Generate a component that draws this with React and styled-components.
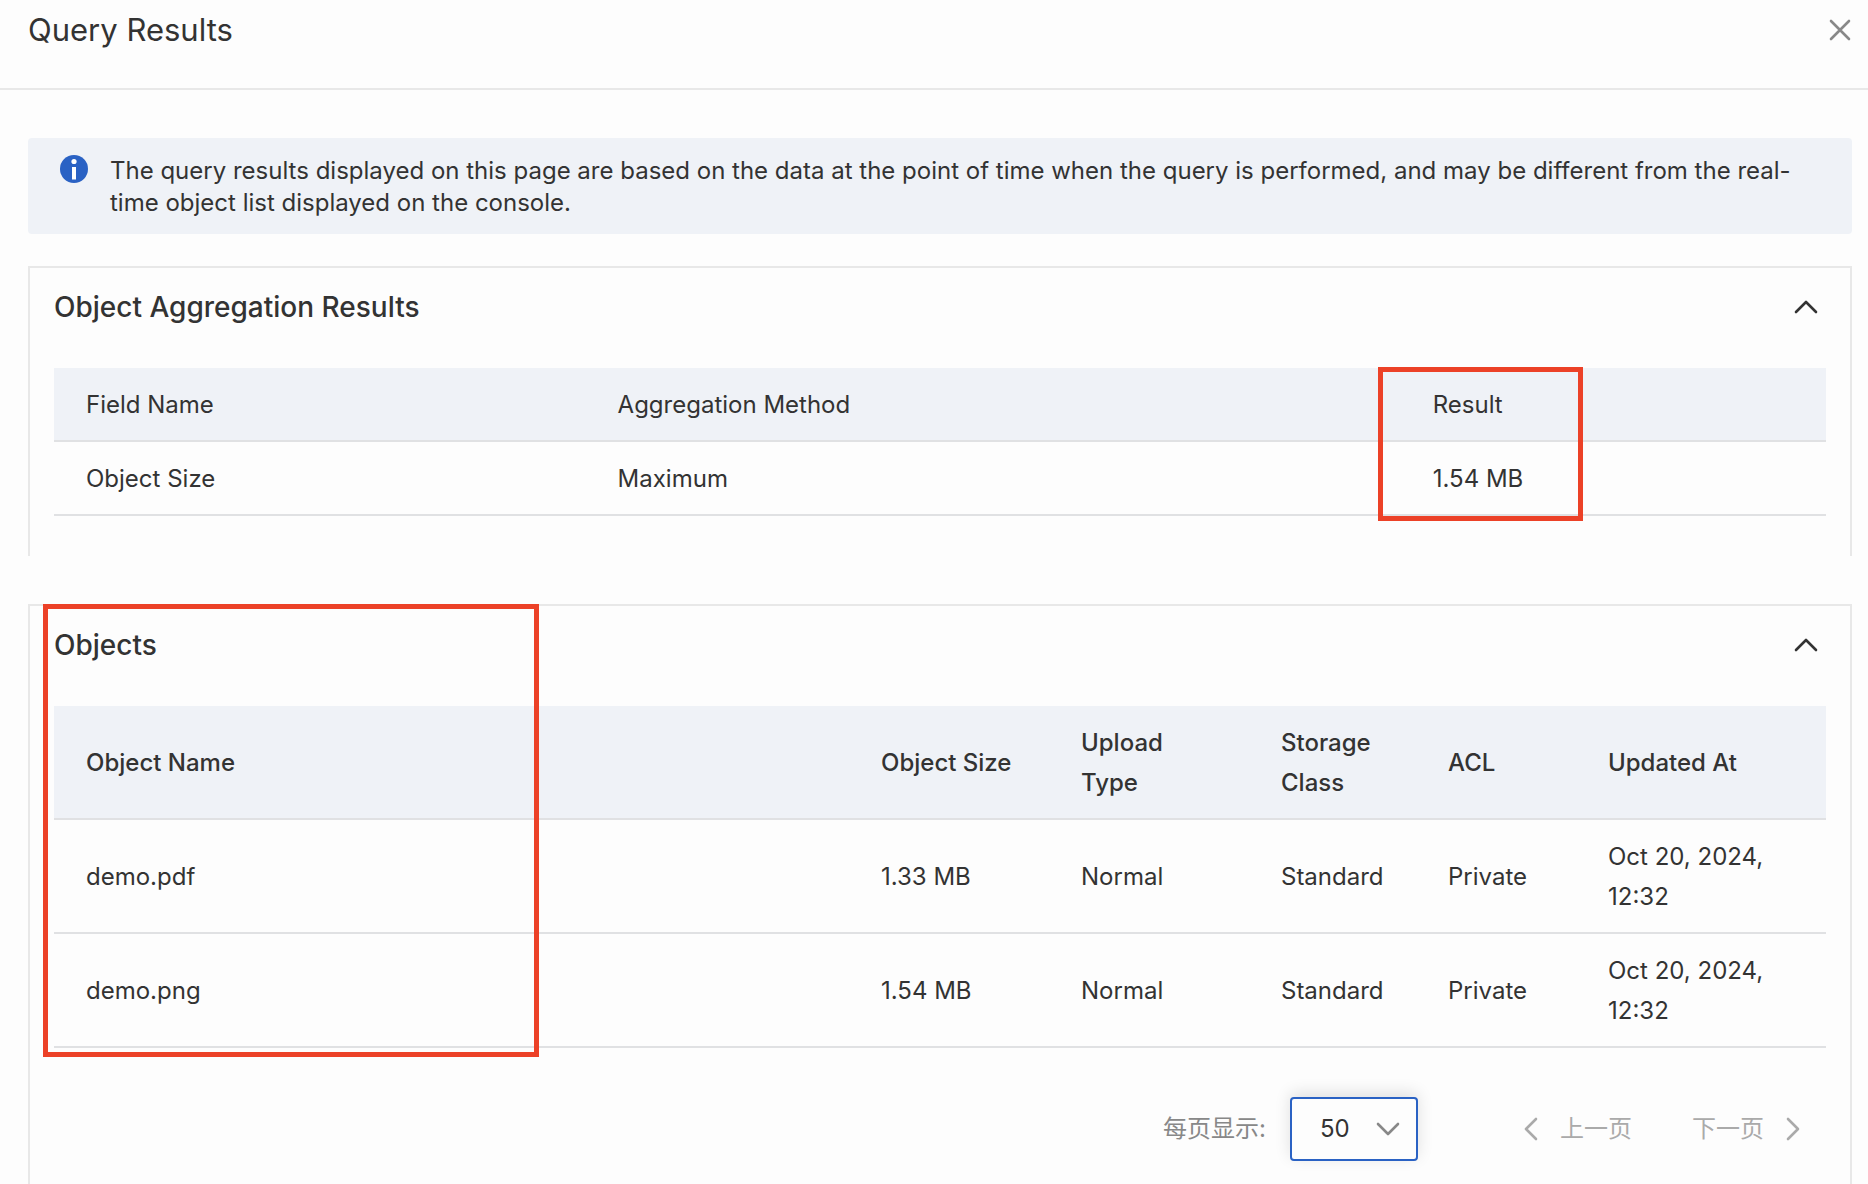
import React, { useState } from "react";
import styled, { createGlobalStyle } from "styled-components";

const GlobalStyle = createGlobalStyle`
  *, *::before, *::after { box-sizing: border-box; }
  body {
    margin: 0;
    background: #fdfdfd;
    color: #333;
    font-family: Inter, "Noto Sans CJK SC", sans-serif;
    font-size: 24px;
    line-height: 32px;
  }
`;

const Page = styled.div`
  display: flex;
  flex-direction: column;
  min-height: 100vh;
`;

const Header = styled.header`
  display: flex;
  justify-content: space-between;
  align-items: flex-start;
  padding: 10px 16px 38px 28px;
  border-bottom: 2px solid #e8e8e8;
`;

const Title = styled.h1`
  margin: 0;
  font-size: 31px;
  font-weight: 400;
  line-height: 40px;
`;

const IconButton = styled.button`
  display: flex;
  align-items: center;
  justify-content: center;
  width: 24px;
  height: 40px;
  padding: 0;
  border: 0;
  background: none;
  color: ${(p) => p.$color};
  cursor: pointer;
`;

const Content = styled.main`
  display: flex;
  flex: 1;
  flex-direction: column;
  padding: 48px 16px 0 28px;
`;

const Notice = styled.div`
  display: flex;
  gap: 22px;
  padding: 17px 32px 15px;
  margin-bottom: 32px;
  border-radius: 4px;
  background: #eff2f7;

  svg { flex: none; }
  p { margin: 0; }
`;

const Card = styled.section`
  position: relative;
  flex: ${(p) => (p.$grow ? "1" : "none")};
  padding: 0 24px 40px;
  margin-bottom: ${(p) => (p.$grow ? "0" : "48px")};
  border: 2px solid #e8e8e8;
  border-bottom: 0;
`;

const CardHeader = styled.div`
  display: flex;
  justify-content: space-between;
  padding: 19px 8px 41px 0;
`;

const CardTitle = styled.h2`
  margin: 0;
  font-size: 28px;
  font-weight: 500;
  line-height: 40px;
`;

const TableWrap = styled.div`
  position: relative;
`;

const Table = styled.table`
  width: 100%;
  table-layout: fixed;
  border-collapse: separate;
  border-spacing: 0;
  line-height: 40px;

  th, td {
    padding: 17px 32px 15px;
    border-bottom: 2px solid #e0e1e3;
    text-align: left;
    vertical-align: middle;
  }
  th {
    background: #eff2f7;
    font-weight: ${(p) => p.$headWeight};
  }
`;

const Col = styled.col`
  width: ${(p) => p.$width};
`;

const Highlight = styled.div`
  position: absolute;
  top: ${(p) => p.$top};
  left: ${(p) => p.$left};
  width: ${(p) => p.$width};
  height: ${(p) => p.$height};
  border: 5px solid #ec4127;
  pointer-events: none;
`;

const Pagination = styled.div`
  display: flex;
  align-items: center;
  justify-content: flex-end;
  padding: 49px 26px 0 0;
`;

const SizeLabel = styled.label`
  margin-right: 24px;
  color: #888;
`;

const SelectBox = styled.div`
  position: relative;
  width: 128px;
  margin-right: 106px;

  svg {
    position: absolute;
    top: 25px;
    right: 18px;
    color: #888;
    pointer-events: none;
  }
`;

const Select = styled.select`
  display: block;
  width: 100%;
  height: 64px;
  padding: 0 28px;
  border: 2px solid #2a62c4;
  border-radius: 4px;
  outline: 0;
  appearance: none;
  background: #fdfdfd;
  box-shadow: 0 -4px 16px rgba(0, 0, 0, 0.12);
  color: #333;
  font: inherit;
`;

const PageButton = styled.button`
  display: flex;
  align-items: center;
  gap: 22px;
  padding: 0;
  border: 0;
  background: none;
  color: #aaa;
  font: inherit;

  & + & { margin-left: 60px; }
`;

const Chevron = ({ d, width, height }) => (
  <svg width={width} height={height} viewBox={`0 0 ${width} ${height}`} fill="none" stroke="currentColor" strokeWidth="2.6" strokeLinecap="round" strokeLinejoin="round" aria-hidden="true">
    <path d={d} />
  </svg>
);

const InfoIcon = () => (
  <svg width="28" height="28" viewBox="0 0 28 28" aria-hidden="true">
    <circle cx="14" cy="14" r="14" fill="#2a62c4" />
    <circle cx="14" cy="6.5" r="2.6" fill="#fff" />
    <path d="M12 12H16V24.5H12Z" fill="#fff" />
  </svg>
);

const OBJECTS = [
  ["demo.pdf", "1.33 MB", "Normal", "Standard", "Private", "Oct 20, 2024, 12:32"],
  ["demo.png", "1.54 MB", "Normal", "Standard", "Private", "Oct 20, 2024, 12:32"],
];

const OBJECT_COLUMNS = [
  ["Object Name", "auto"],
  ["Object Size", "200px"],
  ["Upload Type", "200px"],
  ["Storage Class", "167px"],
  ["ACL", "160px"],
  ["Updated At", "250px"],
];

function CollapsibleCard({ title, grow, children }) {
  const [open, setOpen] = useState(true);
  return (
    <Card $grow={grow}>
      <CardHeader>
        <CardTitle>{title}</CardTitle>
        <IconButton $color="#333" aria-label={`Toggle ${title}`} aria-expanded={open} onClick={() => setOpen(!open)}>
          <Chevron width={24} height={14} d="M2 12L12 2L22 12" />
        </IconButton>
      </CardHeader>
      {open && children}
    </Card>
  );
}

export default function App() {
  const [pageSize, setPageSize] = useState("50");
  return (
    <Page>
      <GlobalStyle />
      <Header>
        <Title>Query Results</Title>
        <IconButton $color="#888" aria-label="Close">
          <Chevron width={24} height={24} d="M3 3L21 21M21 3L3 21" />
        </IconButton>
      </Header>
      <Content>
        <Notice>
          <InfoIcon />
          <p>
            The query results displayed on this page are based on the data at the point of time when the query is
            performed, and may be different from the real-time object list displayed on the console.
          </p>
        </Notice>

        <CollapsibleCard title="Object Aggregation Results">
          <TableWrap>
            <Table $headWeight={400}>
              <colgroup>
                <Col $width="30%" />
                <Col $width="46%" />
                <Col $width="24%" />
              </colgroup>
              <thead>
                <tr>
                  <th>Field Name</th>
                  <th>Aggregation Method</th>
                  <th>Result</th>
                </tr>
              </thead>
              <tbody>
                <tr>
                  <td>Object Size</td>
                  <td>Maximum</td>
                  <td>1.54 MB</td>
                </tr>
              </tbody>
            </Table>
            <Highlight $top="-1px" $left="calc(76% - 23px)" $width="205px" $height="154px" />
          </TableWrap>
        </CollapsibleCard>

        <CollapsibleCard title="Objects" grow>
          <Table $headWeight={500}>
            <colgroup>
              {OBJECT_COLUMNS.map(([name, width]) => (
                <Col key={name} $width={width} />
              ))}
            </colgroup>
            <thead>
              <tr>
                {OBJECT_COLUMNS.map(([name]) => (
                  <th key={name}>{name}</th>
                ))}
              </tr>
            </thead>
            <tbody>
              {OBJECTS.map((row) => (
                <tr key={row[0]}>
                  {row.map((value, i) => (
                    <td key={i}>{value}</td>
                  ))}
                </tr>
              ))}
            </tbody>
          </Table>
          <Highlight $top="-2px" $left="13px" $width="496px" $height="453px" />
          <Pagination>
            <SizeLabel htmlFor="page-size">每页显示:</SizeLabel>
            <SelectBox>
              <Select id="page-size" value={pageSize} onChange={(e) => setPageSize(e.target.value)}>
                <option>20</option>
                <option>50</option>
                <option>100</option>
              </Select>
              <Chevron width={24} height={14} d="M2 2L12 12L22 2" />
            </SelectBox>
            <PageButton disabled>
              <Chevron width={14} height={24} d="M12 2L2 12L12 22" />
              上一页
            </PageButton>
            <PageButton disabled>
              下一页
              <Chevron width={14} height={24} d="M2 2L12 12L2 22" />
            </PageButton>
          </Pagination>
        </CollapsibleCard>
      </Content>
    </Page>
  );
}
